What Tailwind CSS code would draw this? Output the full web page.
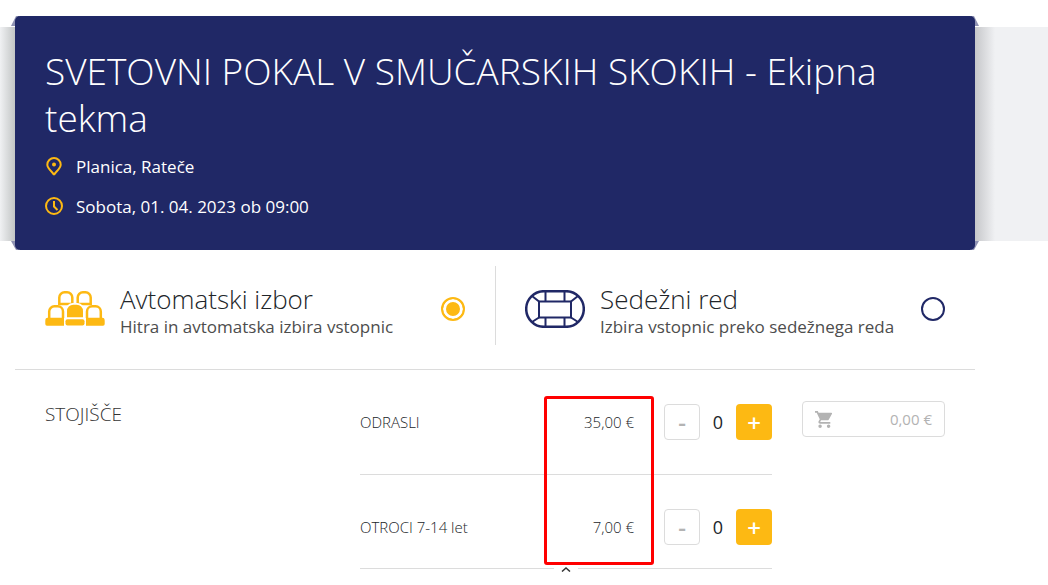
<!DOCTYPE html>
<html lang="sl">

<head>
  <meta charset="UTF-8">
  <meta name="viewport" content="width=device-width, initial-scale=1.0">
  <title>Svetovni pokal v smučarskih skokih</title>
  <script src="https://cdn.jsdelivr.net/npm/@tailwindcss/browser@4"></script>
</head>

<body class="min-h-screen bg-white font-['Open_Sans',sans-serif] font-light text-[#212529]">
  <!-- Event header -->
  <header class="relative pt-4">
    <!-- Band behind the card -->
    <div class="absolute inset-x-0 top-[27px] bottom-[9px] bg-[#f0f1f3]"></div>
    <div class="relative ml-[15px] max-w-[960px]">
      <div class="absolute -left-[15px] top-[11px] bottom-[9px] w-[15px] bg-linear-to-r from-[#f0f1f3] to-[#c2c5c5]"></div>
      <div class="absolute left-full top-[11px] bottom-[9px] w-5 bg-linear-to-r from-[#c6c7ca] to-[#f0f1f3]"></div>
      <!-- Folded corners -->
      <svg class="absolute -left-1 top-0 w-2 h-[10px]" viewBox="0 0 8 10" fill="#9093b3"><path d="M5 0 0 10h8V0z" /></svg>
      <svg class="absolute -right-1 top-0 w-2 h-[10px]" viewBox="0 0 8 10" fill="#9093b3"><path d="M3 0l5 10H0V0z" /></svg>
      <svg class="absolute -left-1 bottom-0 w-2 h-[9px]" viewBox="0 0 8 9" fill="#9093b3"><path d="M0 0l5 9h3V0z" /></svg>
      <svg class="absolute -right-1 bottom-0 w-2 h-[9px]" viewBox="0 0 8 9" fill="#9093b3"><path d="M8 0 3 9H0V0z" /></svg>

      <div class="relative rounded-[5px] bg-[#202866] px-[30px] pt-[31px] pb-[23px] text-white">
        <h1 class="text-[37px] leading-[47px]">SVETOVNI POKAL V SMUČARSKIH SKOKIH - Ekipna tekma</h1>
        <ul class="mt-[6px] text-[17px] font-normal">
          <li class="flex h-10 items-center gap-[13px]">
            <svg class="w-[18px] h-5" viewBox="0 0 18 20" fill="none" stroke="#fdb913" stroke-width="2">
              <path d="M9 18C8.500 15.500 2.300 12 2.300 7.700a6.700 6.700 0 0 1 13.400 0c0 4.300-6.200 7.800-6.700 10.300z" />
              <circle cx="9" cy="7.500" r="2" fill="#fdb913" stroke="none" />
            </svg>
            <span>Planica, Rateče</span>
          </li>
          <li class="flex h-10 items-center gap-[13px]">
            <svg class="w-[18px] h-5" viewBox="0 0 18 20" fill="none" stroke="#fdb913" stroke-width="2">
              <circle cx="9" cy="9" r="8" />
              <path d="M9 4v5.500l3.500 3.500" />
            </svg>
            <span>Sobota, 01. 04. 2023 ob 09:00</span>
          </li>
        </ul>
      </div>
    </div>
  </header>

  <main class="ml-[15px] max-w-[960px] pb-4">
    <!-- Selection mode -->
    <div class="grid grid-cols-2 border-b border-[#dcdcdc] pt-4 pb-6">
      <label for="mode-auto" class="flex h-[79px] items-center px-[30px] pb-[9px] pt-4">
        <svg class="w-[60px] h-9 shrink-0" viewBox="0 0 60 36" fill="none" stroke="#fdb913" stroke-width="2.500">
          <path d="M14.300 13V6.500a5.200 5.200 0 0 1 5.200-5.200h2.600a5.200 5.200 0 0 1 5.200 5.200V13zM32.700 13V6.500a5.200 5.200 0 0 1 5.200-5.200h2.600a5.200 5.200 0 0 1 5.200 5.200V13z" />
          <path d="M4.200 27v-6.500a5.200 5.200 0 0 1 5.200-5.200h3.400a5.200 5.200 0 0 1 5.200 5.200V27M42 27v-6.500a5.200 5.200 0 0 1 5.200-5.200h3.400a5.200 5.200 0 0 1 5.200 5.200V27" fill="#fff" />
          <path d="M20.800 27v-7.500a7 7 0 0 1 7-7.500h4.400a7 7 0 0 1 7 7.500V27z" fill="#fff" stroke="none" />
          <g fill="#fdb913" stroke="none">
            <path d="M2.500 26.800H19v8H2a1.700 1.700 0 0 1-1.700-1.700v-3.300c0-1.700.7-3 2.200-3zM57.500 26.800H41v8h17a1.700 1.700 0 0 0 1.700-1.700v-3.300c0-1.700-.7-3-2.200-3z" />
            <path d="M22 26.300V20a6.300 6.300 0 0 1 6.300-6.300h3.400A6.300 6.300 0 0 1 38 20v6.300z" />
            <rect x="20.500" y="28.300" width="19" height="6.200" rx="2" />
          </g>
        </svg>
        <span class="ml-[15px] flex-1 pt-1">
          <span class="block text-[26px] leading-8">Avtomatski izbor</span>
          <span class="block text-[17px] leading-6 font-normal text-[#4d4d4d]">Hitra in avtomatska izbira vstopnic</span>
        </span>
        <input type="radio" id="mode-auto" name="mode" checked
          class="size-6 shrink-0 appearance-none rounded-full border-2 border-[#202866] bg-white checked:border-[#fdb913] checked:bg-[#fdb913] checked:inset-ring-3 checked:inset-ring-white">
      </label>
      <label for="mode-seat" class="flex h-[79px] items-center border-l border-[#dcdcdc] pr-[30px] pl-[29px] pb-[9px] pt-4">
        <svg class="w-[60px] h-[38px] shrink-0" viewBox="0 0 60 38" fill="none" stroke="#202866" stroke-width="2">
          <rect x="1.200" y="1.200" width="57.600" height="35.600" rx="17.800" stroke-width="2.500" />
          <path d="M14 11.500h32v16H14z" />
          <path d="M20.500 1.500v9.500M39.500 1.500v9.500M20.500 28v9M39.500 28v9M7 6l7 5.500M53 6l-7 5.500M7 32l7-4.500M53 32l-7-4.500" />
        </svg>
        <span class="ml-[15px] flex-1 pt-1">
          <span class="block text-[26px] leading-8">Sedežni red</span>
          <span class="block text-[17px] leading-6 font-normal text-[#4d4d4d]">Izbira vstopnic preko sedežnega reda</span>
        </span>
        <input type="radio" id="mode-seat" name="mode"
          class="size-6 shrink-0 appearance-none rounded-full border-2 border-[#202866] bg-white checked:border-[#fdb913] checked:bg-[#fdb913] checked:inset-ring-3 checked:inset-ring-white">
      </label>
    </div>

    <!-- Tickets -->
    <section class="flex items-start px-[30px]">
      <h2 class="w-[315px] shrink-0 pt-8 text-[19px] leading-6 text-[#333]">STOJIŠČE</h2>

      <div class="relative flex-1">
        <ul class="text-[15px]">
          <li class="flex items-center border-b border-[#dcdcdc] py-[34px]">
            <span class="flex-1">ODRASLI</span>
            <span class="mr-[30px]">35,00 €</span>
            <button type="button" aria-label="Odstrani" class="size-9 rounded-sm border border-[#dcdcdc] text-2xl leading-8 font-semibold text-[#b3b3b3]">-</button>
            <output class="w-9 text-center text-lg font-normal">0</output>
            <button type="button" aria-label="Dodaj" class="size-9 rounded-sm bg-[#fdb913] pt-0.5 text-2xl leading-8 font-semibold text-white">+</button>
          </li>
          <li class="flex items-center border-b border-[#dcdcdc] pt-[34px] pb-[23px]">
            <span class="flex-1">OTROCI 7-14 let</span>
            <span class="mr-[30px]">7,00 €</span>
            <button type="button" aria-label="Odstrani" class="size-9 rounded-sm border border-[#dcdcdc] text-2xl leading-8 font-semibold text-[#b3b3b3]">-</button>
            <output class="w-9 text-center text-lg font-normal">0</output>
            <button type="button" aria-label="Dodaj" class="size-9 rounded-sm bg-[#fdb913] pt-0.5 text-2xl leading-8 font-semibold text-white">+</button>
          </li>
        </ul>
        <!-- Collapse handle -->
        <button type="button" aria-label="Skrij" class="absolute left-1/2 -bottom-2 flex h-4 w-6 -translate-x-1/2 items-center justify-center bg-white">
          <svg class="w-[10px] h-[6px]" viewBox="0 0 10 6" fill="none" stroke="#333" stroke-width="1.500"><path d="M1 5.500L5 2l4 3.500" /></svg>
        </button>
        <!-- Price highlight -->
        <div class="pointer-events-none absolute top-[26px] right-[118px] bottom-1 w-[110px] rounded-[3px] border-3 border-[#ff0000]"></div>
      </div>

      <button type="button" class="mt-[31px] ml-[30px] flex h-9 w-[143px] items-center justify-between rounded-sm border border-[#dcdcdc] px-3 text-[15px] font-normal text-[#b3b3b3]">
        <svg class="w-[17px] h-[17px]" viewBox="1 2 20 20" fill="#b3b3b3">
          <path d="M7 18c-1.100 0-1.990.9-1.990 2S5.900 22 7 22s2-.9 2-2-.9-2-2-2zM1 2v2h2l3.600 7.590-1.350 2.450c-.16.280-.25.610-.25.960 0 1.100.9 2 2 2h12v-2H7.420c-.14 0-.25-.11-.25-.25l.03-.12.900-1.630h7.450c.75 0 1.410-.41 1.750-1.030l3.580-6.490A1 1 0 0 0 20 4H5.210l-.94-2H1zm16 16c-1.100 0-1.990.9-1.990 2s.89 2 1.990 2 2-.9 2-2-.9-2-2-2z" />
        </svg>
        <span>0,00 €</span>
      </button>
    </section>
  </main>
</body>

</html>
